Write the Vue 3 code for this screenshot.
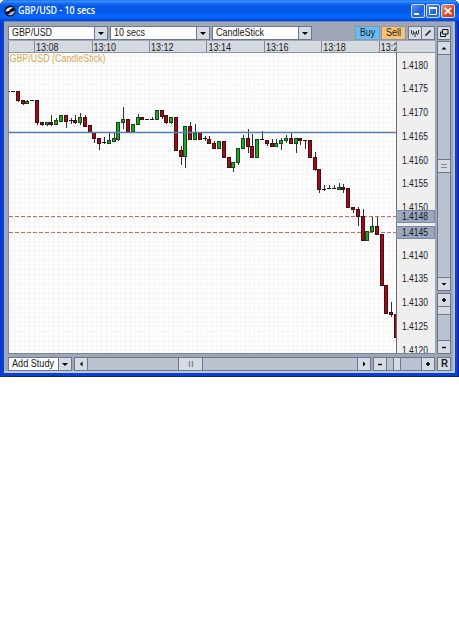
<script setup>
import { h } from 'vue'

const Label = (props) =>
  h('svg', { class: 'label', width: props.w, height: 14 }, [
    h('text', { x: 0, y: 10, textLength: props.w, lengthAdjust: 'spacingAndGlyphs' }, props.text),
  ])
Label.props = ['text', 'w']

const combos = [
  { text: 'GBP/USD', w: 40 },
  { text: '10 secs', w: 31 },
  { text: 'CandleStick', w: 48 },
]

const times = ['13:08', '13:10', '13:12', '13:14', '13:16', '13:18', '13:20'].map((t, i) => ({
  t,
  x: 25.6 + i * 57.45,
}))

const prices = Array.from({ length: 13 }, (_, i) => ({
  t: (1.418 - i * 0.0005).toFixed(4),
  y: 15.5 + i * 23.75,
}))

// direction, body top, body bottom, wick top, wick bottom
const raw = `d 91 92 91 92|d 91 92 91 92|r 91 100 91 102|r 100 103 100 105|g 101 103 100 103|d 100 101 100 101
r 100 122 100 125|r 122 124 122 126|g 122 124 122 126|r 122 124 115 126|g 120 124 118 124|g 115 121 115 121
r 115 121 115 128|d 120 121 118 124|r 120 122 115 124|g 117 122 113 125|r 117 126 115 126|r 125 132 125 132
r 132 138 132 143|r 138 143 138 150|d 142 143 137 144|g 140 143 133 143|g 138 141 133 142|g 122 139 122 141
g 119 122 107 129|r 119 131 119 133|g 124 131 124 133|g 117 124 114 124|r 117 119 117 119|d 119 120 119 120
d 119 120 117 120|g 110 119 110 119|r 110 116 110 119|r 115 122 115 124|g 117 122 117 124|r 117 150 117 150
r 150 156 146 165|g 126 156 126 168|r 126 139 122 139|g 133 139 124 139|r 133 139 133 139|d 138 139 136 141
r 139 143 136 143|r 143 148 141 148|g 141 148 141 148|r 141 157 141 157|r 157 167 157 167|g 162 167 162 172
g 148 162 148 165|g 138 148 135 148|r 138 146 129 153|r 146 157 134 157|g 139 157 139 157|d 139 140 131 140
r 140 143 140 146|r 143 146 139 146|g 143 146 139 146|g 140 143 138 150|g 138 140 135 143|r 138 143 133 143
g 138 143 138 153|r 138 140 138 145|d 140 141 140 149|r 140 157 140 157|r 157 169 152 171|r 169 189 169 193
d 189 190 185 191|d 188 189 185 189|d 188 189 185 189|g 187 189 183 189|r 187 189 184 193|r 188 207 188 207
r 207 209 207 213|r 209 216 207 226|r 216 240 209 240|g 231 240 231 240|g 226 231 217 231|r 226 234 217 234
r 234 285 234 285|r 285 313 285 313|r 312 314 302 317|r 314 337 314 337`

const candles = raw.split(/[|\n]/).map((s, n) => {
  const [k, ...v] = s.trim().split(' ')
  const [top, bottom, high, low] = v.map((y) => y - 53)
  return { k, top, bottom, high, low, x: Math.round(17.9 + (n - 2) * 4.787) - 9 }
})
</script>

<template>
  <div class="window">
    <header class="title">
      <svg class="logo" width="12" height="12" viewBox="0 0 12 12">
        <circle cx="6" cy="6" r="5.6" fill="#071225" />
        <path d="M1.4 6.8C3 2.2 6.4 1.6 9.6 2.8 6.8 3 6.3 5.2 4.6 5.9 3.4 6.5 2.4 5.9 1.4 6.8Z" fill="#fff" />
        <path d="M3.2 9.6C5.4 9.6 6.2 6.8 8.6 6.5 9.6 6.4 10.4 5.9 10.8 5.2 11 8.8 7 11.6 3.2 9.6Z" fill="#aebdd2" />
      </svg>
      <Label class="title-text" text="GBP/USD - 10 secs" :w="77" />
      <div class="controls">
        <span class="ctl"><svg width="14" height="14"><path d="M3 10h5" stroke="#fff" stroke-width="2" /></svg></span>
        <span class="ctl"><svg width="14" height="14"><path d="M3.500 4v6.500h7V4" fill="none" stroke="#fff" /><path d="M3 4h8" stroke="#fff" stroke-width="2" /></svg></span>
        <span class="ctl close"><svg width="14" height="14"><path d="M3.800 3.800l6.400 6.400M10.200 3.800l-6.400 6.400" stroke="#fff" stroke-width="1.800" /></svg></span>
      </div>
    </header>

    <main class="client">
      <div class="toolbar">
        <div v-for="c in combos" :key="c.text" class="combo">
          <Label :text="c.text" :w="c.w" />
          <span class="btn"><svg width="12" height="12"><path d="M3 5h6L6 8z" fill="#000" /></svg></span>
        </div>
        <span class="action buy"><Label text="Buy" :w="15" /></span>
        <span class="action sell"><Label text="Sell" :w="15" /></span>
        <div class="pair">
          <span class="btn"><svg width="12" height="12"><path d="M2.500 3v3l1.500 2M9.500 3v3L8 8M4.500 4v3M7.500 4v3M6 5v5" fill="none" stroke="#222" stroke-width=".9" /></svg></span>
          <span class="btn"><svg width="12" height="12"><path d="M3.500 8.500l5-5" stroke="#111" stroke-width="1.400" /></svg></span>
        </div>
        <span class="btn restore"><svg width="12" height="12"><path d="M4.500 2.500h5.500v4.500H4.500zM2.500 5v4.500h5V7M2.500 5h2" fill="none" stroke="#111" /></svg></span>
      </div>

      <div class="middle">
        <section class="chart">
          <svg class="times" width="426" height="11">
            <defs><clipPath id="clipTime"><rect width="387" height="12" /></clipPath></defs>
            <g clip-path="url(#clipTime)">
              <template v-for="m in times" :key="m.t">
                <path :d="`M${Math.floor(m.x) + 0.5} 0v12`" stroke="#7f889c" />
                <text :x="m.x + 1.500" y="9.800" textLength="22.500" lengthAdjust="spacingAndGlyphs">{{ m.t }}</text>
              </template>
            </g>
            <path d="M387.500 0v12" stroke="#7f889c" />
          </svg>
          <div class="body">
            <svg class="plot" width="387" height="300">
              <defs>
                <pattern id="grid" width="4.787" height="4.750" patternUnits="userSpaceOnUse" x="1" y="2.500">
                  <path d="M0 .5h4.787M.5 0v4.750" stroke="#f5f5f5" fill="none" />
                </pattern>
              </defs>
              <rect width="388" height="300" fill="#fefefe" />
              <rect width="388" height="300" fill="url(#grid)" />
              <text class="series" x="0.500" y="9" textLength="96" lengthAdjust="spacingAndGlyphs">GBP/USD (CandleStick)</text>
              <path d="M0 163.500h388M0 179.500h388" stroke="#c4714f" stroke-dasharray="4 2" />
              <g v-for="(c, i) in candles" :key="i">
                <path :d="`M${c.x + 0.5} ${c.high}V${c.low}`" stroke="#333" />
                <rect v-if="c.k === 'd' || c.bottom - c.top < 2" :x="c.x - 2" :y="c.top" width="4" :height="c.bottom - c.top" fill="#1b1212" />
                <rect v-else :x="c.x - 1.500" :y="c.top + 0.500" width="3" :height="c.bottom - c.top" :fill="c.k === 'g' ? '#1fa62a' : '#9a101a'" :stroke="c.k === 'g' ? '#144a19' : '#480b0f'" />
              </g>
              <path d="M0 79.500h388" stroke="#5580ae" stroke-width="1.300" />
            </svg>
            <svg class="axis" width="39" height="300">
              <path d="M.5 0v300" stroke="#6c6c70" />
              <text v-for="p in prices" :key="p.t" x="6" :y="p.y" textLength="26" lengthAdjust="spacingAndGlyphs">{{ p.t }}</text>
              <g v-for="q in [{ t: '1.4148', y: 157.500 }, { t: '1.4145', y: 173.500 }]" :key="q.t">
                <rect x="0.500" :y="q.y" width="38" height="12" fill="#9ba7bf" stroke="#7c879d" />
                <text x="6" :y="q.y + 9.500" textLength="26" lengthAdjust="spacingAndGlyphs">{{ q.t }}</text>
              </g>
            </svg>
          </div>
        </section>

        <aside class="side">
          <div class="scroll vertical">
            <span class="btn"><svg width="12" height="12"><path d="M3.500 7.500h5L6 5z" fill="#000" /></svg></span>
            <span class="track before"></span>
            <span class="btn thumb"><svg width="12" height="12"><path d="M3 4.500h6M3 7.500h6" stroke="#858b97" /></svg></span>
            <span class="track"></span>
            <span class="btn"><svg width="12" height="12"><path d="M3.500 5h5L6 7.500z" fill="#000" /></svg></span>
          </div>
          <div class="scroll vertical scale">
            <span class="btn"><svg width="12" height="12"><path d="M4 6h4M6 4v4" stroke="#000" stroke-width="1.600" /></svg></span>
            <span class="btn thumb"></span>
            <span class="track"></span>
            <span class="btn"><svg width="12" height="12"><path d="M4 6.500h4" stroke="#000" stroke-width="1.400" /></svg></span>
          </div>
        </aside>
      </div>

      <div class="bottom">
        <div class="combo study">
          <Label text="Add Study" :w="42" />
          <span class="btn"><svg width="12" height="12"><path d="M3 5h6L6 8z" fill="#000" /></svg></span>
        </div>
        <div class="scroll horizontal">
          <span class="btn"><svg width="12" height="12"><path d="M7.500 3.500v5L5 6z" fill="#000" /></svg></span>
          <span class="track before"></span>
          <span class="btn thumb"><svg width="12" height="12"><path d="M4.500 3v6M7.500 3v6" stroke="#858b97" stroke-width="1.400" /></svg></span>
          <span class="track"></span>
          <span class="btn"><svg width="12" height="12"><path d="M5 3.500v5L7.500 6z" fill="#000" /></svg></span>
        </div>
        <div class="scroll horizontal scale">
          <span class="btn"><svg width="12" height="12"><path d="M4 6.500h4" stroke="#000" stroke-width="1.400" /></svg></span>
          <span class="track before"></span>
          <span class="btn thumb"></span>
          <span class="track"></span>
          <span class="btn"><svg width="12" height="12"><path d="M4 6h4M6 4v4" stroke="#000" stroke-width="1.600" /></svg></span>
        </div>
        <span class="btn reset"><Label text="R" :w="7" /></span>
      </div>
    </main>
  </div>
</template>

<style>
body {
  background: #fff;
}
</style>

<style scoped>
.window {
  box-sizing: border-box;
  width: 459px;
  height: 377px;
  display: flex;
  flex-direction: column;
  padding: 0 4px 4px;
  border-radius: 6px 6px 0 0;
  background: #0b3fd0;
  box-shadow: inset 1px 0 #0735ca, inset -1px 0 #0a1e9a, inset 0 -1px #0a1e9a;
  font: 10px "Liberation Sans", Arial, sans-serif;
  overflow: hidden;
}
svg {
  display: block;
  flex: none;
}
text {
  fill: #1a1a1a;
}
.label {
  overflow: visible;
  fill: #1a1a1a;
}
.title {
  height: 21px;
  flex: none;
  display: flex;
  align-items: center;
  gap: 2px;
  margin: 0 -4px;
  padding: 0 4px;
  background: linear-gradient(#1560dc 0, #3d9aff 1px, #1c70f4 3px, #0658e6 6px, #0458e8 11px, #0667ff 16px, #0461fb 18px, #0344c8 21px);
}
.title .title-text {
  fill: #fff;
  font: 600 10px "Open Sans", "Noto Sans", sans-serif;
}
.controls {
  display: flex;
  gap: 1px;
  margin-left: auto;
  padding-top: 1px;
}
.ctl {
  box-sizing: border-box;
  width: 14px;
  height: 14px;
  border: 1px solid #c9dcff;
  border-radius: 2px;
  background: linear-gradient(135deg, #5a92f5, #2560e0 60%, #2f72f0);
}
.ctl svg {
  margin: -1px;
}
.close {
  background: linear-gradient(135deg, #ee9070, #d9481f 60%, #c8401c);
}
.client {
  flex: 1;
  display: flex;
  flex-direction: column;
  padding: 5px 3px 2px 4px;
  background: #9fa6b8;
  box-shadow: inset 0 1px #7686ae, inset 0 -2px #c0cadf, inset -2px 0 #b4c0d8;
}
.toolbar {
  display: flex;
  height: 14px;
  margin-bottom: 1px;
}
.combo {
  box-sizing: border-box;
  display: flex;
  justify-content: space-between;
  align-items: center;
  width: 100px;
  height: 14px;
  margin-right: 2px;
  padding-left: 3px;
  border: 1px solid #6d778c;
  border-right: 0;
  background: #fefefe;
}
.btn {
  box-sizing: border-box;
  display: flex;
  flex: none;
  align-items: center;
  justify-content: center;
  width: 14px;
  height: 14px;
  border: 1px solid #6d778c;
  background: #d5dae3;
}
.action {
  box-sizing: border-box;
  display: flex;
  align-items: center;
  justify-content: center;
  width: 25px;
  height: 14px;
  border: 1px solid #8c98aa;
}
.buy {
  margin-left: 41px;
  background: #67bef5;
}
.sell {
  margin-left: 1px;
  background: #f8c175;
}
.pair {
  display: flex;
  margin-left: 2px;
}
.pair .btn + .btn {
  margin-left: -1px;
}
.restore {
  margin-left: 2px;
}
.middle {
  flex: none;
  display: flex;
  gap: 2px;
  height: 313px;
}
.chart {
  width: 427px;
  display: flex;
  flex-direction: column;
  box-sizing: border-box;
  border: 1px solid #7c869a;
  border-top-width: 0;
}
.times {
  background: #d5d9e0;
  border-bottom: 1px solid #8c94a5;
}
.body {
  flex: 1;
  display: flex;
}
.axis {
  background: #efeff0;
}
.plot .series {
  fill: #d1ac50;
}
.side {
  display: flex;
  flex-direction: column;
  gap: 2px;
}
.scroll {
  box-sizing: border-box;
  display: flex;
  background: #bac1cf;
}
.vertical {
  width: 14px;
  height: 250px;
  flex-direction: column;
  box-shadow: inset 1px 0 #6d778c, inset -1px 0 #6d778c;
}
.vertical .before {
  flex: none;
  height: 104px;
}
.vertical.scale {
  height: 61px;
}
.vertical.scale .thumb {
  height: 9px;
  margin-top: -1px;
}
.track {
  flex: 1;
}
.bottom {
  display: flex;
  margin-top: 3px;
}
.study {
  width: 64px;
}
.horizontal {
  width: 297px;
  height: 14px;
  margin-right: 2px;
  box-shadow: inset 0 1px #6d778c, inset 0 -1px #6d778c;
}
.horizontal .before {
  flex: none;
  width: 90px;
}
.horizontal .thumb {
  width: 25px;
}
.horizontal.scale {
  width: 62px;
}
.horizontal.scale .before {
  width: 6px;
}
.horizontal.scale .thumb {
  width: 8px;
}
.reset {
  font-weight: bold;
}
</style>
